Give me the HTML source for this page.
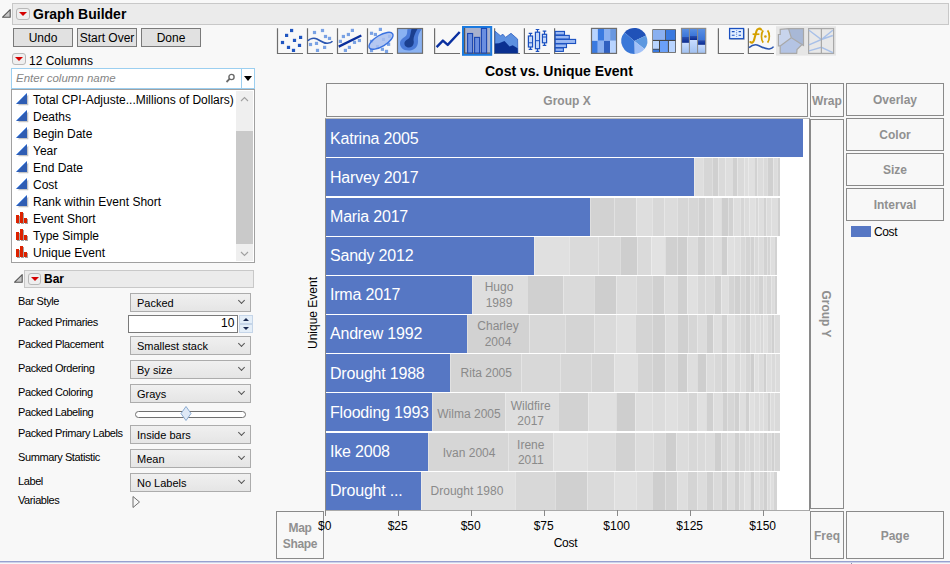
<!DOCTYPE html>
<html><head><meta charset="utf-8">
<style>
*{box-sizing:border-box;margin:0;padding:0}
html,body{width:950px;height:564px;overflow:hidden;background:#f8f8f8;font-family:"Liberation Sans",sans-serif;color:#000;position:relative}
.a{position:absolute}
.t{position:absolute;white-space:nowrap;line-height:1}
.btn{position:absolute;background:#e1e1e1;border:1px solid #7a7a7a;font-size:12px;text-align:center;padding-top:1px}
.redbtn{position:absolute;border:1px solid #b8b8b8;border-radius:3px;background:#efefef}
.redbtn:after{content:"";position:absolute;left:1.5px;top:2.6px;border-left:4.2px solid transparent;border-right:4.2px solid transparent;border-top:4.6px solid #d40000}
.dd{position:absolute;left:130px;width:121px;height:19px;background:linear-gradient(#f0f0f0,#e5e5e5);border:1px solid #acacac;font-size:11px}
.dd span{position:absolute;left:6px;top:3px}
.dd i{position:absolute;right:6px;top:4px;width:5px;height:5px;border-right:1px solid #555;border-bottom:1px solid #555;transform:rotate(45deg)}
.lbl{position:absolute;left:18px;font-size:11px;letter-spacing:-0.4px;margin-top:0.5px;white-space:nowrap;line-height:1}
.li{position:absolute;left:33px;font-size:12px;white-space:nowrap;line-height:1}
.sg{position:absolute;box-shadow:inset 1px 0 0 rgba(255,255,255,0.3)}
.bl{position:absolute;left:330px;font-size:16px;letter-spacing:-0.2px;color:#fff;white-space:nowrap;line-height:1}
.gl{position:absolute;font-size:12px;color:#8a8a8a;white-space:nowrap;line-height:1}
.zone{position:absolute;border:1px solid #8a8a8a;background:#f8f8f8;color:#909090;font-weight:bold;font-size:12px;text-align:center}
</style></head><body>

<!-- title bar -->
<svg class="a" style="left:0;top:6px" width="13" height="14"><path d="M2.6 11.2 L10.2 3.6 L10.2 11.2 Z" fill="#c6c6c6" stroke="#555" stroke-width="1.1" stroke-linejoin="round"/></svg>
<div class="a" style="left:12px;top:3px;width:937px;height:22px;background:#ebebeb;border:1px solid #c8c8c8"></div>
<div class="redbtn" style="left:16px;top:8px;width:14px;height:12px;border-radius:3px"></div>
<div class="t" style="left:33px;top:7px;font-size:14px;font-weight:bold">Graph Builder</div>

<!-- buttons -->
<div class="btn" style="left:13px;top:28px;width:60px;height:19px;line-height:17px">Undo</div>
<div class="btn" style="left:77px;top:28px;width:60px;height:19px;line-height:17px">Start Over</div>
<div class="btn" style="left:141px;top:28px;width:60px;height:19px;line-height:17px">Done</div>

<!-- columns -->
<div class="redbtn" style="left:12px;top:53px;width:14px;height:12px"></div>
<div class="t" style="left:29px;top:55px;font-size:12px">12 Columns</div>
<div class="a" style="left:11px;top:68px;width:244px;height:21px;background:#fff;border:1px solid #9ccff0"></div>
<div class="a" style="left:241px;top:69px;width:1px;height:19px;background:#9ccff0"></div>
<div class="t" style="left:16px;top:73px;font-size:11.5px;font-style:italic;color:#858585">Enter column name</div>
<svg class="a" style="left:225px;top:73px" width="11" height="11"><circle cx="6.5" cy="4" r="2.6" fill="none" stroke="#6a6a6a" stroke-width="1.4"/><path d="M4.6 5.9 L1.5 9" stroke="#6a6a6a" stroke-width="1.8"/></svg>
<div class="a" style="left:244px;top:76px;width:0;height:0;border-left:4px solid transparent;border-right:4px solid transparent;border-top:5px solid #000"></div>

<!-- list -->
<div class="a" style="left:11px;top:89px;width:244px;height:174px;background:#fff;border:1px solid #a0a0a0"></div>
<div class="a" style="left:236px;top:91px;width:17px;height:170px;background:#efefef"></div>
<div class="a" style="left:236px;top:131px;width:17px;height:113px;background:#c9c9c9"></div>
<svg class="a" style="left:236px;top:91px" width="17" height="170"><path d="M5 10 L8.5 6.5 L12 10" fill="none" stroke="#a0a0a0" stroke-width="1.1"/><path d="M5 161 L8.5 164.5 L12 161" fill="none" stroke="#a0a0a0" stroke-width="1.1"/></svg>

<svg class="a" style="left:16px;top:93px" width="13" height="13"><path d="M1 11.5 L11.5 1 L11.5 11.5 Z" fill="#2d5cb5" transform="translate(0.8,0.8)" opacity="0.35" style="fill:#555"/><path d="M0 11 L11 0 L11 11 Z" fill="#2f5db3"/><path d="M0.5 10.5 L10.5 0.5" stroke="#6aa0f0" stroke-width="1"/></svg>
<div class="li" style="top:94px">Total CPI-Adjuste...Millions of Dollars)</div>
<svg class="a" style="left:16px;top:110px" width="13" height="13"><path d="M1 11.5 L11.5 1 L11.5 11.5 Z" fill="#2d5cb5" transform="translate(0.8,0.8)" opacity="0.35" style="fill:#555"/><path d="M0 11 L11 0 L11 11 Z" fill="#2f5db3"/><path d="M0.5 10.5 L10.5 0.5" stroke="#6aa0f0" stroke-width="1"/></svg>
<div class="li" style="top:111px">Deaths</div>
<svg class="a" style="left:16px;top:127px" width="13" height="13"><path d="M1 11.5 L11.5 1 L11.5 11.5 Z" fill="#2d5cb5" transform="translate(0.8,0.8)" opacity="0.35" style="fill:#555"/><path d="M0 11 L11 0 L11 11 Z" fill="#2f5db3"/><path d="M0.5 10.5 L10.5 0.5" stroke="#6aa0f0" stroke-width="1"/></svg>
<div class="li" style="top:128px">Begin Date</div>
<svg class="a" style="left:16px;top:144px" width="13" height="13"><path d="M1 11.5 L11.5 1 L11.5 11.5 Z" fill="#2d5cb5" transform="translate(0.8,0.8)" opacity="0.35" style="fill:#555"/><path d="M0 11 L11 0 L11 11 Z" fill="#2f5db3"/><path d="M0.5 10.5 L10.5 0.5" stroke="#6aa0f0" stroke-width="1"/></svg>
<div class="li" style="top:145px">Year</div>
<svg class="a" style="left:16px;top:161px" width="13" height="13"><path d="M1 11.5 L11.5 1 L11.5 11.5 Z" fill="#2d5cb5" transform="translate(0.8,0.8)" opacity="0.35" style="fill:#555"/><path d="M0 11 L11 0 L11 11 Z" fill="#2f5db3"/><path d="M0.5 10.5 L10.5 0.5" stroke="#6aa0f0" stroke-width="1"/></svg>
<div class="li" style="top:162px">End Date</div>
<svg class="a" style="left:16px;top:178px" width="13" height="13"><path d="M1 11.5 L11.5 1 L11.5 11.5 Z" fill="#2d5cb5" transform="translate(0.8,0.8)" opacity="0.35" style="fill:#555"/><path d="M0 11 L11 0 L11 11 Z" fill="#2f5db3"/><path d="M0.5 10.5 L10.5 0.5" stroke="#6aa0f0" stroke-width="1"/></svg>
<div class="li" style="top:179px">Cost</div>
<svg class="a" style="left:16px;top:195px" width="13" height="13"><path d="M1 11.5 L11.5 1 L11.5 11.5 Z" fill="#2d5cb5" transform="translate(0.8,0.8)" opacity="0.35" style="fill:#555"/><path d="M0 11 L11 0 L11 11 Z" fill="#2f5db3"/><path d="M0.5 10.5 L10.5 0.5" stroke="#6aa0f0" stroke-width="1"/></svg>
<div class="li" style="top:196px">Rank within Event Short</div>
<svg class="a" style="left:16px;top:212px" width="13" height="13"><g fill="#666" opacity="0.6"><rect x="1" y="4" width="3" height="8"/><rect x="5" y="1" width="3" height="11"/><rect x="9" y="7" width="3" height="5"/></g><g fill="#dd2200"><rect x="0" y="3" width="3" height="8"/><rect x="4" y="0" width="3" height="11"/><rect x="8" y="6" width="3" height="5"/></g></svg>
<div class="li" style="top:213px">Event Short</div>
<svg class="a" style="left:16px;top:229px" width="13" height="13"><g fill="#666" opacity="0.6"><rect x="1" y="4" width="3" height="8"/><rect x="5" y="1" width="3" height="11"/><rect x="9" y="7" width="3" height="5"/></g><g fill="#dd2200"><rect x="0" y="3" width="3" height="8"/><rect x="4" y="0" width="3" height="11"/><rect x="8" y="6" width="3" height="5"/></g></svg>
<div class="li" style="top:230px">Type Simple</div>
<svg class="a" style="left:16px;top:246px" width="13" height="13"><g fill="#666" opacity="0.6"><rect x="1" y="4" width="3" height="8"/><rect x="5" y="1" width="3" height="11"/><rect x="9" y="7" width="3" height="5"/></g><g fill="#dd2200"><rect x="0" y="3" width="3" height="8"/><rect x="4" y="0" width="3" height="11"/><rect x="8" y="6" width="3" height="5"/></g></svg>
<div class="li" style="top:247px">Unique Event</div>
<!-- Bar section -->
<svg class="a" style="left:12px;top:271px" width="13" height="14"><path d="M2.6 11.2 L10.2 3.6 L10.2 11.2 Z" fill="#c6c6c6" stroke="#555" stroke-width="1.1" stroke-linejoin="round"/></svg>
<div class="a" style="left:24px;top:270px;width:230px;height:18px;background:#ebebeb;border:1px solid #c8c8c8"></div>
<div class="redbtn" style="left:28px;top:273px;width:13px;height:12px"></div>
<div class="t" style="left:44px;top:273px;font-size:12px;font-weight:bold">Bar</div>

<div class="lbl" style="top:295.5px">Bar Style</div>
<div class="lbl" style="top:316.1px">Packed Primaries</div>
<div class="lbl" style="top:338.5px">Packed Placement</div>
<div class="lbl" style="top:362.4px">Packed Ordering</div>
<div class="lbl" style="top:386.8px">Packed Coloring</div>
<div class="lbl" style="top:406.3px">Packed Labeling</div>
<div class="lbl" style="top:427.5px">Packed Primary Labels</div>
<div class="lbl" style="top:451.4px">Summary Statistic</div>
<div class="lbl" style="top:475.3px">Label</div>
<div class="lbl" style="top:494.8px">Variables</div>
<div class="dd" style="top:293px"><span>Packed</span><i></i></div>
<div class="dd" style="top:336px"><span>Smallest stack</span><i></i></div>
<div class="dd" style="top:360px"><span>By size</span><i></i></div>
<div class="dd" style="top:384px"><span>Grays</span><i></i></div>
<div class="dd" style="top:425px"><span>Inside bars</span><i></i></div>
<div class="dd" style="top:449px"><span>Mean</span><i></i></div>
<div class="dd" style="top:473px"><span>No Labels</span><i></i></div>
<!-- textbox + spinner -->
<div class="a" style="left:128px;top:315px;width:110px;height:18px;background:#fff;border:1px solid #7a7a7a"></div>
<div class="t" style="left:221px;top:317px;font-size:12px">10</div>
<div class="a" style="left:239px;top:315px;width:14px;height:9px;background:#e4eef8;border:1px solid #c5d5e8"></div>
<div class="a" style="left:239px;top:324px;width:14px;height:9px;background:#e4eef8;border:1px solid #c5d5e8"></div>
<div class="a" style="left:243px;top:318px;width:0;height:0;border-left:3px solid transparent;border-right:3px solid transparent;border-bottom:3px solid #1a2a50"></div>
<div class="a" style="left:243px;top:327px;width:0;height:0;border-left:3px solid transparent;border-right:3px solid transparent;border-top:3px solid #1a2a50"></div>
<!-- slider -->
<div class="a" style="left:135px;top:411px;width:111px;height:7px;background:#fff;border:1px solid #707070;border-radius:4px"></div>
<svg class="a" style="left:180px;top:406px" width="12" height="15"><path d="M6 0.5 L11 7.5 L6 14.5 L1 7.5 Z" fill="#dfe9f6" stroke="#8aaad0" stroke-width="1"/></svg>
<!-- variables triangle -->
<svg class="a" style="left:132px;top:496px" width="9" height="12"><path d="M1 0.5 L7.5 6 L1 11.5 Z" fill="#f7f7f7" stroke="#707070" stroke-width="1"/></svg>

<svg class="a" style="left:270px;top:20px" width="580" height="40" viewBox="270 20 580 40"><path d="M277.5 28.2 V53.5 H303" fill="none" stroke="#6e6e6e" stroke-width="1.2"/><rect x="290.0" y="28.9" width="3.2" height="3.2" fill="#1f55c0"/><rect x="285.0" y="33.8" width="3.2" height="3.2" fill="#1f55c0"/><rect x="299.0" y="35.8" width="3.2" height="3.2" fill="#1f55c0"/><rect x="292.9" y="38.8" width="3.2" height="3.2" fill="#1f55c0"/><rect x="280.9" y="40.9" width="3.2" height="3.2" fill="#1f55c0"/><rect x="297.9" y="43.8" width="3.2" height="3.2" fill="#1f55c0"/><rect x="286.9" y="45.8" width="3.2" height="3.2" fill="#1f55c0"/><rect x="291.9" y="48.8" width="3.2" height="3.2" fill="#1f55c0"/><path d="M307.5 28.2 V53.5 H333" fill="none" stroke="#6e6e6e" stroke-width="1.2"/><rect x="312.9" y="30.9" width="3.2" height="3.2" fill="#7aa2e4"/><rect x="320.9" y="28.9" width="3.2" height="3.2" fill="#7aa2e4"/><rect x="323.9" y="34.9" width="3.2" height="3.2" fill="#7aa2e4"/><rect x="327.9" y="36.8" width="3.2" height="3.2" fill="#7aa2e4"/><rect x="308.9" y="42.9" width="3.2" height="3.2" fill="#7aa2e4"/><rect x="314.9" y="41.8" width="3.2" height="3.2" fill="#7aa2e4"/><rect x="323.0" y="45.8" width="3.2" height="3.2" fill="#7aa2e4"/><rect x="315.9" y="48.8" width="3.2" height="3.2" fill="#7aa2e4"/><path d="M307.8 40.8 C310 38.6 314 37.6 317 39 C320.5 40.6 323.5 43.6 327.4 43.3 C329.8 43.1 331.5 42.4 332.5 41.3" fill="none" stroke="#2a55b0" stroke-width="1.6"/><path d="M337.5 28.2 V53.5 H363" fill="none" stroke="#6e6e6e" stroke-width="1.2"/><rect x="350.79999999999995" y="28.799999999999997" width="3.2" height="3.2" fill="#7aa2e4"/><rect x="346.79999999999995" y="32.9" width="3.2" height="3.2" fill="#7aa2e4"/><rect x="341.79999999999995" y="34.9" width="3.2" height="3.2" fill="#7aa2e4"/><rect x="338.79999999999995" y="39.8" width="3.2" height="3.2" fill="#7aa2e4"/><rect x="357.79999999999995" y="38.9" width="3.2" height="3.2" fill="#7aa2e4"/><rect x="352.9" y="40.8" width="3.2" height="3.2" fill="#7aa2e4"/><rect x="347.79999999999995" y="45.8" width="3.2" height="3.2" fill="#7aa2e4"/><rect x="343.79999999999995" y="48.8" width="3.2" height="3.2" fill="#7aa2e4"/><path d="M338.7 46.6 L361.3 35.5" stroke="#0a2f9c" stroke-width="2.4" fill="none"/><path d="M367.5 28.2 V53.5 H393" fill="none" stroke="#6e6e6e" stroke-width="1.2"/><rect x="378.79999999999995" y="27.799999999999997" width="3.2" height="3.2" fill="#7aa2e4"/><rect x="369.9" y="31.699999999999996" width="3.2" height="3.2" fill="#7aa2e4"/><rect x="373.79999999999995" y="32.9" width="3.2" height="3.2" fill="#7aa2e4"/><rect x="387.9" y="34.8" width="3.2" height="3.2" fill="#7aa2e4"/><rect x="381.9" y="37.8" width="3.2" height="3.2" fill="#7aa2e4"/><rect x="369.9" y="39.8" width="3.2" height="3.2" fill="#7aa2e4"/><rect x="387.0" y="42.699999999999996" width="3.2" height="3.2" fill="#7aa2e4"/><rect x="375.9" y="44.9" width="3.2" height="3.2" fill="#7aa2e4"/><rect x="380.79999999999995" y="47.699999999999996" width="3.2" height="3.2" fill="#7aa2e4"/><rect x="369.9" y="49.0" width="3.2" height="3.2" fill="#7aa2e4"/><rect x="384.9" y="49.8" width="3.2" height="3.2" fill="#7aa2e4"/><ellipse cx="381" cy="40.8" rx="13.6" ry="5.6" transform="rotate(-31 381 40.8)" fill="#a9bff0" fill-opacity="0.85" stroke="#3a72e0" stroke-width="1.4"/><rect x="397.5" y="28.5" width="25" height="24.8" fill="#8ab2f2" stroke="#6e6e6e" stroke-width="1.2"/><path d="M407.5 29 L421.8 29 C419 33 417.5 36 418 40 C418.5 45 416 50 410 50.5 C403 51 399.8 47 400 43 C400.3 38.5 405 37.5 406.5 35 C407.5 33 407 31 407.5 29 Z" fill="#4a7ad8"/><path d="M411.5 29 L417.5 29 C415 33 413.5 37 413.5 40 C414.5 43 413 47.5 409 47.5 C405.5 47.5 404 45 404.5 42.5 C405.2 40 408.5 39.5 409.5 37.5 C410.5 35 410.8 31.5 411.5 29 Z" fill="#1b3f8f"/><path d="M434.6 28.2 V53.5 H460" fill="none" stroke="#6e6e6e" stroke-width="1.2"/><path d="M436.6 47.1 L442.9 40.6 L447.7 44.9 L459.7 32" fill="none" stroke="#0a30a0" stroke-width="2.4" stroke-linejoin="round"/><rect x="463" y="27" width="28.2" height="27.8" fill="#a9b1cd" stroke="#1a7ae0" stroke-width="2"/><path d="M464.6 28.1 V53.1 H490.1" fill="none" stroke="#555" stroke-width="1.2"/><rect x="467.6" y="33.5" width="5.0" height="19.5" fill="#6a8ee0" stroke="#1a45b0" stroke-width="1.1"/><rect x="474.6" y="37.4" width="5.0" height="15.600000000000001" fill="#6a8ee0" stroke="#1a45b0" stroke-width="1.1"/><rect x="481.4" y="28.4" width="5.2000000000000455" height="24.6" fill="#6a8ee0" stroke="#1a45b0" stroke-width="1.1"/><path d="M494.6 28.2 V53.5 H520" fill="none" stroke="#6e6e6e" stroke-width="1.2"/><path d="M495 31.2 L500.4 35.7 L503 34.3 L505.5 37.4 L511 33.3 L517.6 39.1 L517.8 53 L495 53 Z" fill="#5c90e0" stroke="#2f60c0" stroke-width="0.8"/><path d="M495 43.5 L499 43.2 L504.5 41.1 L509.6 46.6 L512.7 45.2 L517.6 48.3 L517.8 53 L495 53 Z" fill="#0a3090"/><path d="M524.4 28.2 V53.5 H550" fill="none" stroke="#6e6e6e" stroke-width="1.2"/><path d="M530.5 33.3 V36 M530.5 47 V49.3 M528.7 33.3 H532.3 M528.7 49.3 H532.3" stroke="#1a50c0" stroke-width="1.2" fill="none"/><rect x="528.4" y="36" width="4.2000000000000455" height="11" fill="#c4d8fa" stroke="#1a50c0" stroke-width="1.2"/><path d="M528.4 42.8 H532.6" stroke="#1a50c0" stroke-width="1"/><path d="M537.5 29.5 V32.2 M537.5 48.7 V51.4 M535.7 29.5 H539.3 M535.7 51.4 H539.3" stroke="#1a50c0" stroke-width="1.2" fill="none"/><rect x="535.4" y="32.2" width="4.2000000000000455" height="16.5" fill="#c4d8fa" stroke="#1a50c0" stroke-width="1.2"/><path d="M535.4 40.7 H539.6" stroke="#1a50c0" stroke-width="1"/><path d="M544.5 31.2 V34.3 M544.5 42.8 V45.4 M542.7 31.2 H546.3 M542.7 45.4 H546.3" stroke="#1a50c0" stroke-width="1.2" fill="none"/><rect x="542.4" y="34.3" width="4.2000000000000455" height="8.5" fill="#c4d8fa" stroke="#1a50c0" stroke-width="1.2"/><path d="M542.4 37 H546.6" stroke="#1a50c0" stroke-width="1"/><path d="M554.6 28.2 V53.5 H580" fill="none" stroke="#6e6e6e" stroke-width="1.2"/><rect x="555.2" y="31.4" width="9.299999999999955" height="3.6000000000000014" fill="#9ab8f2" stroke="#1a50c0" stroke-width="1.1"/><rect x="555.2" y="35.4" width="14.099999999999909" height="3.700000000000003" fill="#9ab8f2" stroke="#1a50c0" stroke-width="1.1"/><rect x="555.2" y="39.4" width="20.399999999999977" height="4.100000000000001" fill="#9ab8f2" stroke="#1a50c0" stroke-width="1.1"/><rect x="555.2" y="43.9" width="11.299999999999955" height="3.700000000000003" fill="#9ab8f2" stroke="#1a50c0" stroke-width="1.1"/><rect x="555.2" y="48" width="8.199999999999932" height="3.3999999999999986" fill="#9ab8f2" stroke="#1a50c0" stroke-width="1.1"/><rect x="591.6" y="28.5" width="6.199999999999932" height="12.3" fill="#b8d4ff"/><rect x="591.6" y="40.8" width="6.199999999999932" height="12.5" fill="#3a7ae0"/><rect x="597.8" y="28.5" width="6.2000000000000455" height="12.3" fill="#3a7ae0"/><rect x="597.8" y="40.8" width="6.2000000000000455" height="12.5" fill="#8ab0f0"/><rect x="604" y="28.5" width="6.100000000000023" height="12.3" fill="#8ab0f0"/><rect x="604" y="40.8" width="6.100000000000023" height="12.5" fill="#3060c0"/><rect x="610.1" y="28.5" width="6.2999999999999545" height="12.3" fill="#6a98e0"/><rect x="610.1" y="40.8" width="6.2999999999999545" height="12.5" fill="#b8d4ff"/><rect x="591.5" y="28.4" width="25" height="25" fill="none" stroke="#6e6e6e" stroke-width="1.2"/><path d="M634.3 41 L624.50 32.45 A13 13 0 0 1 646.03 35.40 Z" fill="#2052b8"/><path d="M634.3 41 L646.03 35.40 A13 13 0 0 1 644.50 49.06 Z" fill="#5c98e0"/><path d="M634.3 41 L644.50 49.06 A13 13 0 0 1 634.67 53.99 Z" fill="#a2c2f8"/><path d="M634.3 41 L634.67 53.99 A13 13 0 0 1 624.50 32.45 Z" fill="#3a78d8"/><rect x="652.4" y="29.3" width="23.5" height="23.4" fill="#444"/><rect x="653" y="30" width="12.200000000000045" height="9.899999999999999" fill="#8ab0f0"/><rect x="666" y="30" width="9.299999999999955" height="9.899999999999999" fill="#3a7ae0"/><rect x="653" y="41" width="6" height="7.799999999999997" fill="#b8d4ff"/><rect x="653" y="49.6" width="6" height="2.3999999999999986" fill="#3a7ae0"/><rect x="660" y="41" width="7.899999999999977" height="11" fill="#6aa0f8"/><rect x="668.9" y="41" width="6.300000000000068" height="11" fill="#b8d4ff"/><defs><linearGradient id="gm" x1="0" y1="0" x2="0" y2="1"><stop offset="0" stop-color="#5a90e4"/><stop offset="1" stop-color="#3a74d8"/></linearGradient><linearGradient id="gd" x1="0" y1="0" x2="0" y2="1"><stop offset="0" stop-color="#2a50b0"/><stop offset="1" stop-color="#0a2a90"/></linearGradient><linearGradient id="gl" x1="0" y1="0" x2="0" y2="1"><stop offset="0" stop-color="#c8dcff"/><stop offset="1" stop-color="#a0c0f0"/></linearGradient></defs><rect x="681.6" y="28.5" width="7.7999999999999545" height="8.5" fill="url(#gm)"/><rect x="681.6" y="37" width="7.7999999999999545" height="5.899999999999999" fill="url(#gd)"/><rect x="681.6" y="42.9" width="7.7999999999999545" height="10.399999999999999" fill="url(#gl)"/><rect x="689.4" y="28.5" width="8.200000000000045" height="7.5" fill="url(#gm)"/><rect x="689.4" y="36" width="8.200000000000045" height="4.100000000000001" fill="url(#gd)"/><rect x="689.4" y="40.1" width="8.200000000000045" height="13.199999999999996" fill="url(#gl)"/><rect x="697.6" y="28.5" width="8.0" height="11.600000000000001" fill="url(#gm)"/><rect x="697.6" y="40.1" width="8.0" height="4.799999999999997" fill="url(#gd)"/><rect x="697.6" y="44.9" width="8.0" height="8.399999999999999" fill="url(#gl)"/><path d="M689.4 28.5 V53.3 M697.6 28.5 V53.3" stroke="#8a8a8a" stroke-width="1"/><rect x="681.5" y="28.4" width="24.2" height="25" fill="none" stroke="#8a8a8a" stroke-width="1.2"/><path d="M718.4 28.2 V53.5 H744" fill="none" stroke="#6e6e6e" stroke-width="1.2"/><rect x="730.4" y="29.2" width="14.4" height="10.8" fill="#999" opacity="0.5"/><rect x="729.6" y="28.5" width="14" height="10.2" fill="#e2eeff" stroke="#1a50c0" stroke-width="1.3"/><path d="M731.8 31.6 H734.6 M738.6 31.6 H741 M731.8 35.3 H734.6 M738.6 35.3 H741 M736.6 30.4 V31 M736.6 32.6 V33.2 M736.6 34.4 V35 M736.6 36.4 V37" stroke="#1a50c0" stroke-width="1.1"/><path d="M748.4 28.2 V53.5 H774" fill="none" stroke="#6e6e6e" stroke-width="1.2"/><path d="M761.2 29.6 C760 28 757.3 28.3 756.5 31 L754 40.2 C753.3 42.6 751.6 43.2 750.4 42" fill="none" stroke="#d4a000" stroke-width="2.1" stroke-linecap="round"/><path d="M752.6 34.2 H759.4" stroke="#d4a000" stroke-width="1.7"/><path d="M763.2 30.4 C760.9 33.2 760.9 39.8 763.2 42.6 M767.6 30.4 C769.9 33.2 769.9 39.8 767.6 42.6" fill="none" stroke="#d4a000" stroke-width="1.7"/><circle cx="765.4" cy="36.5" r="1.3" fill="#d4a000"/><path d="M749 47.6 C751.5 45.5 754 44.3 757 45 C760.5 46 764 49.2 769.3 48.9 C771.5 48.7 772.8 47.8 773.6 46.6" fill="none" stroke="#2a55b0" stroke-width="1.5"/><rect x="776" y="26.2" width="60" height="29.4" fill="#e6e6e6"/><path d="M780.2 29.4 L788.5 28.7 L791.3 37.7 L780.2 45.9 L778.4 45.9 L778.4 34.5 L780.2 34.5 Z" fill="#c8d4ec"/><path d="M788.5 28.6 L803.5 28.5 L803.5 45.5 L791.3 37.7 Z" fill="#a8b8d6"/><path d="M791.3 37.7 L803.5 45.5 L802 44.5 L797 49.5 L796.7 53.4 L780.2 53.4 L780.2 45.9 Z" fill="#b4c4e4"/><path d="M780.2 29.4 L788.5 28.6 L803.5 28.5 L803.5 45.5 L802 44.5 L797 49.5 L796.7 53.4 L780.2 53.4 L780.2 45.9 L778.4 45.9 L778.4 34.5 L780.2 34.5 Z M788.5 28.6 L791.3 37.7 L803.5 45.5 M791.3 37.7 L780.2 45.9" fill="none" stroke="#a8a8a8" stroke-width="1.2"/><rect x="808.6" y="28.6" width="25" height="24.8" fill="#e8e8e8" stroke="#a8a8a8" stroke-width="1.2"/><path d="M809 30.2 L821.4 39.5 L832.8 30.2 M809 44.8 L821.4 39.5 L832.8 35.5 M809 50.9 L821.4 47.3 L832.8 52.7" fill="none" stroke="#a8c0e8" stroke-width="1.4"/><path d="M821.4 28.6 V53.4" stroke="#a8a8a8" stroke-width="1.2"/></svg>
<!-- right: drop zones -->
<div class="t" style="left:485px;top:64px;font-size:14px;font-weight:bold">Cost vs. Unique Event</div>
<div class="zone" style="left:326px;top:83px;width:482px;height:34px;line-height:34px">Group X</div>
<div class="zone" style="left:810px;top:83px;width:34px;height:34px;line-height:34px">Wrap</div>
<div class="zone" style="left:846px;top:83px;width:98px;height:33px;line-height:33px">Overlay</div>
<div class="zone" style="left:846px;top:118px;width:98px;height:33px;line-height:33px">Color</div>
<div class="zone" style="left:846px;top:153px;width:98px;height:33px;line-height:33px">Size</div>
<div class="zone" style="left:846px;top:188px;width:98px;height:33px;line-height:33px">Interval</div>
<div class="zone" style="left:810px;top:119px;width:34px;height:390px"></div>
<div class="zone" style="left:810px;top:511px;width:34px;height:48px;line-height:48px">Freq</div>
<div class="zone" style="left:846px;top:511px;width:98px;height:48px;line-height:48px">Page</div>
<div class="zone" style="left:276px;top:511px;width:48px;height:48px;line-height:16px;padding-top:8px;letter-spacing:-0.3px">Map<br>Shape</div>

<!-- plot frame -->
<div class="a" style="left:325px;top:118px;width:485px;height:393px;background:#fff;border-left:1px solid #8a8a8a;border-top:1px solid #bbb;border-right:1px solid #8a8a8a;border-bottom:1px solid #aaa"></div>

<div class="a" style="left:326px;top:119px;width:477px;height:38px;background:#5677c4"></div>
<div class="bl" style="top:130.5px">Katrina 2005</div>
<div class="sg" style="left:694px;top:158px;width:9px;height:38px;background:#dedede"></div>
<div class="sg" style="left:703px;top:158px;width:9px;height:38px;background:#d6d6d6"></div>
<div class="sg" style="left:712px;top:158px;width:6px;height:38px;background:#d0d0d0"></div>
<div class="sg" style="left:718px;top:158px;width:7px;height:38px;background:#dadada"></div>
<div class="sg" style="left:725px;top:158px;width:7px;height:38px;background:#dedede"></div>
<div class="sg" style="left:732px;top:158px;width:5px;height:38px;background:#d0d0d0"></div>
<div class="sg" style="left:737px;top:158px;width:7px;height:38px;background:#dadada"></div>
<div class="sg" style="left:744px;top:158px;width:4px;height:38px;background:#dedede"></div>
<div class="sg" style="left:748px;top:158px;width:6px;height:38px;background:#e0e0e0"></div>
<div class="sg" style="left:754px;top:158px;width:3px;height:38px;background:#d2d2d2"></div>
<div class="sg" style="left:757px;top:158px;width:6px;height:38px;background:#dcdcdc"></div>
<div class="sg" style="left:763px;top:158px;width:4px;height:38px;background:#dadada"></div>
<div class="sg" style="left:767px;top:158px;width:6px;height:38px;background:#d0d0d0"></div>
<div class="sg" style="left:773px;top:158px;width:4px;height:38px;background:#dcdcdc"></div>
<div class="sg" style="left:777px;top:158px;width:3px;height:38px;background:#d2d2d2"></div>
<div class="a" style="left:326px;top:158px;width:368px;height:38px;background:#5677c4"></div>
<div class="bl" style="top:169.6px">Harvey 2017</div>
<div class="sg" style="left:590px;top:198px;width:24px;height:38px;background:#d2d2d2"></div>
<div class="sg" style="left:614px;top:198px;width:22px;height:38px;background:#d4d4d4"></div>
<div class="sg" style="left:636px;top:198px;width:16px;height:38px;background:#dedede"></div>
<div class="sg" style="left:652px;top:198px;width:12px;height:38px;background:#d8d8d8"></div>
<div class="sg" style="left:664px;top:198px;width:13px;height:38px;background:#dcdcdc"></div>
<div class="sg" style="left:677px;top:198px;width:11px;height:38px;background:#d6d6d6"></div>
<div class="sg" style="left:688px;top:198px;width:10px;height:38px;background:#d6d6d6"></div>
<div class="sg" style="left:698px;top:198px;width:7px;height:38px;background:#d0d0d0"></div>
<div class="sg" style="left:705px;top:198px;width:8px;height:38px;background:#d6d6d6"></div>
<div class="sg" style="left:713px;top:198px;width:8px;height:38px;background:#e0e0e0"></div>
<div class="sg" style="left:721px;top:198px;width:7px;height:38px;background:#cecece"></div>
<div class="sg" style="left:728px;top:198px;width:5px;height:38px;background:#d2d2d2"></div>
<div class="sg" style="left:733px;top:198px;width:7px;height:38px;background:#dedede"></div>
<div class="sg" style="left:740px;top:198px;width:4px;height:38px;background:#d6d6d6"></div>
<div class="sg" style="left:744px;top:198px;width:5px;height:38px;background:#dcdcdc"></div>
<div class="sg" style="left:749px;top:198px;width:6px;height:38px;background:#e0e0e0"></div>
<div class="sg" style="left:755px;top:198px;width:3px;height:38px;background:#d8d8d8"></div>
<div class="sg" style="left:758px;top:198px;width:5px;height:38px;background:#dedede"></div>
<div class="sg" style="left:763px;top:198px;width:3px;height:38px;background:#d2d2d2"></div>
<div class="sg" style="left:766px;top:198px;width:5px;height:38px;background:#dcdcdc"></div>
<div class="sg" style="left:771px;top:198px;width:6px;height:38px;background:#dedede"></div>
<div class="sg" style="left:777px;top:198px;width:3px;height:38px;background:#d0d0d0"></div>
<div class="a" style="left:326px;top:198px;width:264px;height:38px;background:#5677c4"></div>
<div class="bl" style="top:208.8px">Maria 2017</div>
<div class="sg" style="left:534px;top:237px;width:35px;height:38px;background:#e0e0e0"></div>
<div class="sg" style="left:569px;top:237px;width:29px;height:38px;background:#dadada"></div>
<div class="sg" style="left:598px;top:237px;width:22px;height:38px;background:#d8d8d8"></div>
<div class="sg" style="left:620px;top:237px;width:17px;height:38px;background:#cecece"></div>
<div class="sg" style="left:637px;top:237px;width:14px;height:38px;background:#dadada"></div>
<div class="sg" style="left:651px;top:237px;width:14px;height:38px;background:#e2e2e2"></div>
<div class="sg" style="left:665px;top:237px;width:12px;height:38px;background:#d0d0d0"></div>
<div class="sg" style="left:677px;top:237px;width:10px;height:38px;background:#cecece"></div>
<div class="sg" style="left:687px;top:237px;width:10px;height:38px;background:#dcdcdc"></div>
<div class="sg" style="left:697px;top:237px;width:8px;height:38px;background:#d0d0d0"></div>
<div class="sg" style="left:705px;top:237px;width:8px;height:38px;background:#dadada"></div>
<div class="sg" style="left:713px;top:237px;width:8px;height:38px;background:#dedede"></div>
<div class="sg" style="left:721px;top:237px;width:6px;height:38px;background:#cecece"></div>
<div class="sg" style="left:727px;top:237px;width:7px;height:38px;background:#e0e0e0"></div>
<div class="sg" style="left:734px;top:237px;width:6px;height:38px;background:#dedede"></div>
<div class="sg" style="left:740px;top:237px;width:5px;height:38px;background:#d8d8d8"></div>
<div class="sg" style="left:745px;top:237px;width:5px;height:38px;background:#d4d4d4"></div>
<div class="sg" style="left:750px;top:237px;width:4px;height:38px;background:#d2d2d2"></div>
<div class="sg" style="left:754px;top:237px;width:4px;height:38px;background:#dadada"></div>
<div class="sg" style="left:758px;top:237px;width:5px;height:38px;background:#dcdcdc"></div>
<div class="sg" style="left:763px;top:237px;width:4px;height:38px;background:#d2d2d2"></div>
<div class="sg" style="left:767px;top:237px;width:3px;height:38px;background:#d4d4d4"></div>
<div class="sg" style="left:770px;top:237px;width:4px;height:38px;background:#dedede"></div>
<div class="sg" style="left:774px;top:237px;width:3px;height:38px;background:#d2d2d2"></div>
<div class="a" style="left:326px;top:237px;width:208px;height:38px;background:#5677c4"></div>
<div class="bl" style="top:248.0px">Sandy 2012</div>
<div class="sg" style="left:472px;top:276px;width:55px;height:38px;background:#dedede"></div>
<div class="sg" style="left:527px;top:276px;width:36px;height:38px;background:#d0d0d0"></div>
<div class="sg" style="left:563px;top:276px;width:31px;height:38px;background:#dadada"></div>
<div class="sg" style="left:594px;top:276px;width:22px;height:38px;background:#cecece"></div>
<div class="sg" style="left:616px;top:276px;width:20px;height:38px;background:#dcdcdc"></div>
<div class="sg" style="left:636px;top:276px;width:16px;height:38px;background:#d6d6d6"></div>
<div class="sg" style="left:652px;top:276px;width:12px;height:38px;background:#d0d0d0"></div>
<div class="sg" style="left:664px;top:276px;width:13px;height:38px;background:#dcdcdc"></div>
<div class="sg" style="left:677px;top:276px;width:10px;height:38px;background:#d0d0d0"></div>
<div class="sg" style="left:687px;top:276px;width:10px;height:38px;background:#e0e0e0"></div>
<div class="sg" style="left:697px;top:276px;width:8px;height:38px;background:#d8d8d8"></div>
<div class="sg" style="left:705px;top:276px;width:9px;height:38px;background:#dadada"></div>
<div class="sg" style="left:714px;top:276px;width:7px;height:38px;background:#d0d0d0"></div>
<div class="sg" style="left:721px;top:276px;width:7px;height:38px;background:#dedede"></div>
<div class="sg" style="left:728px;top:276px;width:6px;height:38px;background:#d4d4d4"></div>
<div class="sg" style="left:734px;top:276px;width:6px;height:38px;background:#d0d0d0"></div>
<div class="sg" style="left:740px;top:276px;width:5px;height:38px;background:#d6d6d6"></div>
<div class="sg" style="left:745px;top:276px;width:5px;height:38px;background:#d0d0d0"></div>
<div class="sg" style="left:750px;top:276px;width:4px;height:38px;background:#dadada"></div>
<div class="sg" style="left:754px;top:276px;width:4px;height:38px;background:#d8d8d8"></div>
<div class="sg" style="left:758px;top:276px;width:5px;height:38px;background:#d2d2d2"></div>
<div class="sg" style="left:763px;top:276px;width:3px;height:38px;background:#dcdcdc"></div>
<div class="sg" style="left:766px;top:276px;width:5px;height:38px;background:#d6d6d6"></div>
<div class="sg" style="left:771px;top:276px;width:3px;height:38px;background:#dcdcdc"></div>
<div class="sg" style="left:774px;top:276px;width:3px;height:38px;background:#d2d2d2"></div>
<div class="a" style="left:326px;top:276px;width:146px;height:38px;background:#5677c4"></div>
<div class="bl" style="top:287.1px">Irma 2017</div>
<div class="sg" style="left:467px;top:315px;width:62px;height:38px;background:#d2d2d2"></div>
<div class="sg" style="left:529px;top:315px;width:36px;height:38px;background:#d8d8d8"></div>
<div class="sg" style="left:565px;top:315px;width:29px;height:38px;background:#d4d4d4"></div>
<div class="sg" style="left:594px;top:315px;width:22px;height:38px;background:#dadada"></div>
<div class="sg" style="left:616px;top:315px;width:19px;height:38px;background:#e0e0e0"></div>
<div class="sg" style="left:635px;top:315px;width:17px;height:38px;background:#d4d4d4"></div>
<div class="sg" style="left:652px;top:315px;width:13px;height:38px;background:#d0d0d0"></div>
<div class="sg" style="left:665px;top:315px;width:12px;height:38px;background:#dcdcdc"></div>
<div class="sg" style="left:677px;top:315px;width:11px;height:38px;background:#d0d0d0"></div>
<div class="sg" style="left:688px;top:315px;width:9px;height:38px;background:#d6d6d6"></div>
<div class="sg" style="left:697px;top:315px;width:9px;height:38px;background:#dcdcdc"></div>
<div class="sg" style="left:706px;top:315px;width:7px;height:38px;background:#cecece"></div>
<div class="sg" style="left:713px;top:315px;width:8px;height:38px;background:#dedede"></div>
<div class="sg" style="left:721px;top:315px;width:6px;height:38px;background:#d2d2d2"></div>
<div class="sg" style="left:727px;top:315px;width:7px;height:38px;background:#e0e0e0"></div>
<div class="sg" style="left:734px;top:315px;width:6px;height:38px;background:#dadada"></div>
<div class="sg" style="left:740px;top:315px;width:5px;height:38px;background:#d6d6d6"></div>
<div class="sg" style="left:745px;top:315px;width:5px;height:38px;background:#d0d0d0"></div>
<div class="sg" style="left:750px;top:315px;width:5px;height:38px;background:#dedede"></div>
<div class="sg" style="left:755px;top:315px;width:5px;height:38px;background:#dcdcdc"></div>
<div class="sg" style="left:760px;top:315px;width:3px;height:38px;background:#d8d8d8"></div>
<div class="sg" style="left:763px;top:315px;width:4px;height:38px;background:#e0e0e0"></div>
<div class="sg" style="left:767px;top:315px;width:4px;height:38px;background:#d8d8d8"></div>
<div class="sg" style="left:771px;top:315px;width:3px;height:38px;background:#d0d0d0"></div>
<div class="sg" style="left:774px;top:315px;width:6px;height:38px;background:#dcdcdc"></div>
<div class="a" style="left:326px;top:315px;width:141px;height:38px;background:#5677c4"></div>
<div class="bl" style="top:326.3px">Andrew 1992</div>
<div class="sg" style="left:450px;top:354px;width:71px;height:38px;background:#d4d4d4"></div>
<div class="sg" style="left:521px;top:354px;width:39px;height:38px;background:#d8d8d8"></div>
<div class="sg" style="left:560px;top:354px;width:31px;height:38px;background:#d6d6d6"></div>
<div class="sg" style="left:591px;top:354px;width:23px;height:38px;background:#d4d4d4"></div>
<div class="sg" style="left:614px;top:354px;width:23px;height:38px;background:#e0e0e0"></div>
<div class="sg" style="left:637px;top:354px;width:15px;height:38px;background:#d4d4d4"></div>
<div class="sg" style="left:652px;top:354px;width:13px;height:38px;background:#d0d0d0"></div>
<div class="sg" style="left:665px;top:354px;width:12px;height:38px;background:#dadada"></div>
<div class="sg" style="left:677px;top:354px;width:10px;height:38px;background:#cecece"></div>
<div class="sg" style="left:687px;top:354px;width:10px;height:38px;background:#dedede"></div>
<div class="sg" style="left:697px;top:354px;width:9px;height:38px;background:#cecece"></div>
<div class="sg" style="left:706px;top:354px;width:8px;height:38px;background:#dcdcdc"></div>
<div class="sg" style="left:714px;top:354px;width:7px;height:38px;background:#d8d8d8"></div>
<div class="sg" style="left:721px;top:354px;width:6px;height:38px;background:#d2d2d2"></div>
<div class="sg" style="left:727px;top:354px;width:7px;height:38px;background:#e0e0e0"></div>
<div class="sg" style="left:734px;top:354px;width:6px;height:38px;background:#d8d8d8"></div>
<div class="sg" style="left:740px;top:354px;width:5px;height:38px;background:#dedede"></div>
<div class="sg" style="left:745px;top:354px;width:5px;height:38px;background:#d6d6d6"></div>
<div class="sg" style="left:750px;top:354px;width:4px;height:38px;background:#cecece"></div>
<div class="sg" style="left:754px;top:354px;width:4px;height:38px;background:#e0e0e0"></div>
<div class="sg" style="left:758px;top:354px;width:5px;height:38px;background:#dcdcdc"></div>
<div class="sg" style="left:763px;top:354px;width:3px;height:38px;background:#d0d0d0"></div>
<div class="sg" style="left:766px;top:354px;width:5px;height:38px;background:#dedede"></div>
<div class="sg" style="left:771px;top:354px;width:4px;height:38px;background:#dadada"></div>
<div class="sg" style="left:775px;top:354px;width:5px;height:38px;background:#dcdcdc"></div>
<div class="a" style="left:326px;top:354px;width:124px;height:38px;background:#5677c4"></div>
<div class="bl" style="top:365.5px">Drought 1988</div>
<div class="sg" style="left:432px;top:393px;width:73px;height:38px;background:#d2d2d2"></div>
<div class="sg" style="left:505px;top:393px;width:53px;height:38px;background:#dedede"></div>
<div class="sg" style="left:558px;top:393px;width:30px;height:38px;background:#d2d2d2"></div>
<div class="sg" style="left:588px;top:393px;width:28px;height:38px;background:#e0e0e0"></div>
<div class="sg" style="left:616px;top:393px;width:19px;height:38px;background:#cecece"></div>
<div class="sg" style="left:635px;top:393px;width:17px;height:38px;background:#dedede"></div>
<div class="sg" style="left:652px;top:393px;width:13px;height:38px;background:#dcdcdc"></div>
<div class="sg" style="left:665px;top:393px;width:12px;height:38px;background:#e0e0e0"></div>
<div class="sg" style="left:677px;top:393px;width:11px;height:38px;background:#dcdcdc"></div>
<div class="sg" style="left:688px;top:393px;width:9px;height:38px;background:#d6d6d6"></div>
<div class="sg" style="left:697px;top:393px;width:9px;height:38px;background:#e0e0e0"></div>
<div class="sg" style="left:706px;top:393px;width:7px;height:38px;background:#d0d0d0"></div>
<div class="sg" style="left:713px;top:393px;width:9px;height:38px;background:#dedede"></div>
<div class="sg" style="left:722px;top:393px;width:5px;height:38px;background:#d0d0d0"></div>
<div class="sg" style="left:727px;top:393px;width:7px;height:38px;background:#d6d6d6"></div>
<div class="sg" style="left:734px;top:393px;width:5px;height:38px;background:#d0d0d0"></div>
<div class="sg" style="left:739px;top:393px;width:6px;height:38px;background:#dedede"></div>
<div class="sg" style="left:745px;top:393px;width:4px;height:38px;background:#d0d0d0"></div>
<div class="sg" style="left:749px;top:393px;width:5px;height:38px;background:#e0e0e0"></div>
<div class="sg" style="left:754px;top:393px;width:5px;height:38px;background:#dcdcdc"></div>
<div class="sg" style="left:759px;top:393px;width:4px;height:38px;background:#dedede"></div>
<div class="sg" style="left:763px;top:393px;width:4px;height:38px;background:#dcdcdc"></div>
<div class="sg" style="left:767px;top:393px;width:3px;height:38px;background:#d0d0d0"></div>
<div class="sg" style="left:770px;top:393px;width:4px;height:38px;background:#dcdcdc"></div>
<div class="sg" style="left:774px;top:393px;width:6px;height:38px;background:#dadada"></div>
<div class="a" style="left:326px;top:393px;width:106px;height:38px;background:#5677c4"></div>
<div class="bl" style="top:404.6px">Flooding 1993</div>
<div class="sg" style="left:428px;top:433px;width:80px;height:38px;background:#d6d6d6"></div>
<div class="sg" style="left:508px;top:433px;width:45px;height:38px;background:#d8d8d8"></div>
<div class="sg" style="left:553px;top:433px;width:34px;height:38px;background:#e0e0e0"></div>
<div class="sg" style="left:587px;top:433px;width:28px;height:38px;background:#dcdcdc"></div>
<div class="sg" style="left:615px;top:433px;width:20px;height:38px;background:#d2d2d2"></div>
<div class="sg" style="left:635px;top:433px;width:18px;height:38px;background:#dcdcdc"></div>
<div class="sg" style="left:653px;top:433px;width:12px;height:38px;background:#d8d8d8"></div>
<div class="sg" style="left:665px;top:433px;width:11px;height:38px;background:#cecece"></div>
<div class="sg" style="left:676px;top:433px;width:12px;height:38px;background:#dcdcdc"></div>
<div class="sg" style="left:688px;top:433px;width:9px;height:38px;background:#d8d8d8"></div>
<div class="sg" style="left:697px;top:433px;width:8px;height:38px;background:#dadada"></div>
<div class="sg" style="left:705px;top:433px;width:9px;height:38px;background:#dcdcdc"></div>
<div class="sg" style="left:714px;top:433px;width:7px;height:38px;background:#cecece"></div>
<div class="sg" style="left:721px;top:433px;width:6px;height:38px;background:#d8d8d8"></div>
<div class="sg" style="left:727px;top:433px;width:7px;height:38px;background:#dcdcdc"></div>
<div class="sg" style="left:734px;top:433px;width:5px;height:38px;background:#d0d0d0"></div>
<div class="sg" style="left:739px;top:433px;width:6px;height:38px;background:#d6d6d6"></div>
<div class="sg" style="left:745px;top:433px;width:4px;height:38px;background:#dadada"></div>
<div class="sg" style="left:749px;top:433px;width:5px;height:38px;background:#d6d6d6"></div>
<div class="sg" style="left:754px;top:433px;width:5px;height:38px;background:#dcdcdc"></div>
<div class="sg" style="left:759px;top:433px;width:4px;height:38px;background:#d8d8d8"></div>
<div class="sg" style="left:763px;top:433px;width:4px;height:38px;background:#d0d0d0"></div>
<div class="sg" style="left:767px;top:433px;width:4px;height:38px;background:#d8d8d8"></div>
<div class="sg" style="left:771px;top:433px;width:3px;height:38px;background:#d0d0d0"></div>
<div class="sg" style="left:774px;top:433px;width:6px;height:38px;background:#d6d6d6"></div>
<div class="a" style="left:326px;top:433px;width:102px;height:38px;background:#5677c4"></div>
<div class="bl" style="top:443.8px">Ike 2008</div>
<div class="sg" style="left:421px;top:472px;width:94px;height:38px;background:#e0e0e0"></div>
<div class="sg" style="left:515px;top:472px;width:40px;height:38px;background:#d8d8d8"></div>
<div class="sg" style="left:555px;top:472px;width:32px;height:38px;background:#d0d0d0"></div>
<div class="sg" style="left:587px;top:472px;width:27px;height:38px;background:#dadada"></div>
<div class="sg" style="left:614px;top:472px;width:22px;height:38px;background:#e0e0e0"></div>
<div class="sg" style="left:636px;top:472px;width:16px;height:38px;background:#dcdcdc"></div>
<div class="sg" style="left:652px;top:472px;width:13px;height:38px;background:#cecece"></div>
<div class="sg" style="left:665px;top:472px;width:12px;height:38px;background:#d2d2d2"></div>
<div class="sg" style="left:677px;top:472px;width:10px;height:38px;background:#dedede"></div>
<div class="sg" style="left:687px;top:472px;width:10px;height:38px;background:#d4d4d4"></div>
<div class="sg" style="left:697px;top:472px;width:9px;height:38px;background:#dcdcdc"></div>
<div class="sg" style="left:706px;top:472px;width:7px;height:38px;background:#d0d0d0"></div>
<div class="sg" style="left:713px;top:472px;width:8px;height:38px;background:#dadada"></div>
<div class="sg" style="left:721px;top:472px;width:6px;height:38px;background:#d0d0d0"></div>
<div class="sg" style="left:727px;top:472px;width:7px;height:38px;background:#dcdcdc"></div>
<div class="sg" style="left:734px;top:472px;width:5px;height:38px;background:#d0d0d0"></div>
<div class="sg" style="left:739px;top:472px;width:5px;height:38px;background:#dadada"></div>
<div class="sg" style="left:744px;top:472px;width:6px;height:38px;background:#e0e0e0"></div>
<div class="sg" style="left:750px;top:472px;width:4px;height:38px;background:#cecece"></div>
<div class="sg" style="left:754px;top:472px;width:5px;height:38px;background:#dedede"></div>
<div class="sg" style="left:759px;top:472px;width:4px;height:38px;background:#d8d8d8"></div>
<div class="sg" style="left:763px;top:472px;width:4px;height:38px;background:#d0d0d0"></div>
<div class="sg" style="left:767px;top:472px;width:3px;height:38px;background:#dcdcdc"></div>
<div class="sg" style="left:770px;top:472px;width:3px;height:38px;background:#dedede"></div>
<div class="sg" style="left:773px;top:472px;width:4px;height:38px;background:#d4d4d4"></div>
<div class="a" style="left:326px;top:472px;width:95px;height:38px;background:#5677c4"></div>
<div class="bl" style="top:483.0px">Drought ...</div>
<div class="gl" style="left:459px;width:80px;text-align:center;top:281.2px">Hugo</div>
<div class="gl" style="left:459px;width:80px;text-align:center;top:297.0px">1989</div>
<div class="gl" style="left:458px;width:80px;text-align:center;top:320.2px">Charley</div>
<div class="gl" style="left:458px;width:80px;text-align:center;top:336.0px">2004</div>
<div class="gl" style="left:460.6px;top:367.4px">Rita 2005</div>
<div class="gl" style="left:437.3px;top:407.5px">Wilma 2005</div>
<div class="gl" style="left:490.70000000000005px;width:80px;text-align:center;top:399.5px">Wildfire</div>
<div class="gl" style="left:490.70000000000005px;width:80px;text-align:center;top:415.2px">2017</div>
<div class="gl" style="left:442.7px;top:446.5px">Ivan 2004</div>
<div class="gl" style="left:490.79999999999995px;width:80px;text-align:center;top:438.5px">Irene</div>
<div class="gl" style="left:490.79999999999995px;width:80px;text-align:center;top:454.2px">2011</div>
<div class="gl" style="left:430.6px;top:484.9px">Drought 1980</div>
<div class="a" style="left:325.0px;top:510px;width:1px;height:6px;background:#888"></div>
<div class="t" style="left:294.7px;width:60px;text-align:center;top:519.8px;font-size:12px">$0</div>
<div class="a" style="left:398.0px;top:510px;width:1px;height:6px;background:#888"></div>
<div class="t" style="left:367.7px;width:60px;text-align:center;top:519.8px;font-size:12px">$25</div>
<div class="a" style="left:471.0px;top:510px;width:1px;height:6px;background:#888"></div>
<div class="t" style="left:440.7px;width:60px;text-align:center;top:519.8px;font-size:12px">$50</div>
<div class="a" style="left:544.0px;top:510px;width:1px;height:6px;background:#888"></div>
<div class="t" style="left:513.7px;width:60px;text-align:center;top:519.8px;font-size:12px">$75</div>
<div class="a" style="left:617.0px;top:510px;width:1px;height:6px;background:#888"></div>
<div class="t" style="left:586.7px;width:60px;text-align:center;top:519.8px;font-size:12px">$100</div>
<div class="a" style="left:690.0px;top:510px;width:1px;height:6px;background:#888"></div>
<div class="t" style="left:659.7px;width:60px;text-align:center;top:519.8px;font-size:12px">$125</div>
<div class="a" style="left:763.0px;top:510px;width:1px;height:6px;background:#888"></div>
<div class="t" style="left:732.7px;width:60px;text-align:center;top:519.8px;font-size:12px">$150</div>
<div class="t" style="left:519.5px;width:92px;text-align:center;top:536.6px;font-size:12px;letter-spacing:-0.3px">Cost</div>
<div class="t" style="left:277px;top:306.6px;width:72px;text-align:center;font-size:12px;transform:rotate(-90deg)">Unique Event</div>
<div class="t" style="left:788px;top:308px;width:76px;text-align:center;font-size:12px;font-weight:bold;color:#909090;transform:rotate(90deg)">Group Y</div>
<div class="a" style="left:851px;top:226px;width:20px;height:11px;background:#5677c4"></div>
<div class="t" style="left:874px;top:226px;font-size:12px;letter-spacing:-0.4px">Cost</div>
<!-- bottom line -->
<div class="a" style="left:0;top:561px;width:950px;height:1px;background:#97a1cf"></div><div class="a" style="left:0;top:562px;width:950px;height:1px;background:#cdd2ea"></div><div class="a" style="left:851px;top:563px;width:1px;height:1px;background:#8a8fb0"></div>
</body></html>
